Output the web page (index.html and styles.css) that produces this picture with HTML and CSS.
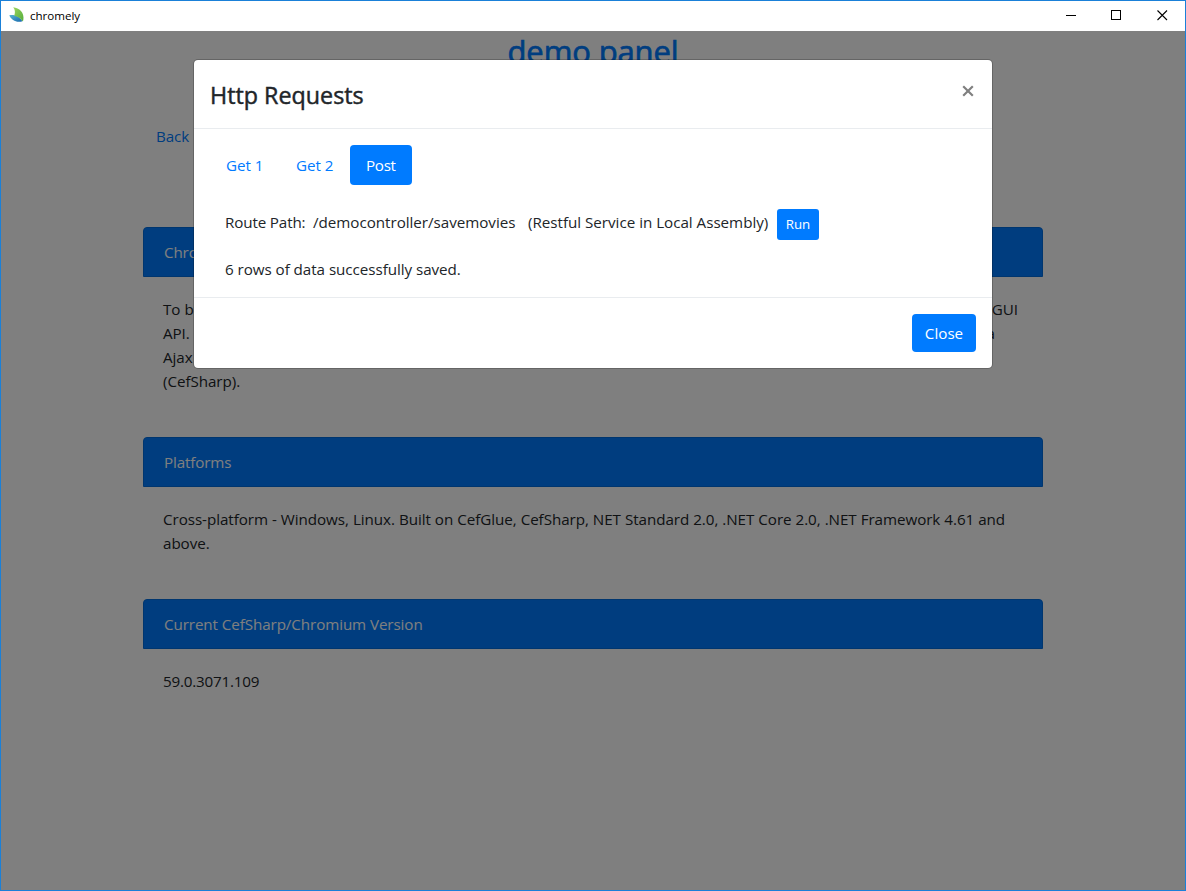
FILE: index.html
```
<!DOCTYPE html>
<html lang="en">
<head>
<meta charset="utf-8">
<title>chromely</title>
<link rel="stylesheet" href="styles.css">
</head>
<body>
<div class="window">
  <header class="titlebar">
    <svg class="logo" width="16" height="16" viewBox="0 0 16 16">
      <defs>
        <linearGradient id="leaf" x1="0" y1="0" x2="1" y2="1"><stop offset="0" stop-color="#9ad45c"/><stop offset="1" stop-color="#55ad3e"/></linearGradient>
        <linearGradient id="wave" x1="0" y1="0" x2="1" y2="1"><stop offset="0" stop-color="#59b5d5"/><stop offset="1" stop-color="#1769ac"/></linearGradient>
      </defs>
      <path d="M0.3 8.200C4 7.500 9.500 8 13.500 14.200C7.500 16 2.500 13.300 0.300 8.200Z" fill="url(#wave)"/>
      <path d="M4.200 0.300C10 0.800 15.800 5.500 14.300 13.200L13.500 14.200C11.500 10.800 8.500 9.500 5.300 8.700C6.500 5 6 2.500 4.200 0.300Z" fill="url(#leaf)"/>
    </svg>
    <span class="caption">chromely</span>
    <div class="controls">
      <svg width="45" height="29" viewBox="0 0 45 29" shape-rendering="crispEdges"><path d="M17 14.500H27" stroke="#000"/></svg>
      <svg width="46" height="29" viewBox="0 0 46 29" shape-rendering="crispEdges"><path d="M17.500 9.500H26.500V18.500H17.500Z" fill="none" stroke="#000"/></svg>
      <svg width="45" height="29" viewBox="0 0 45 29"><path d="M17.500 9.500L27 19M27 9.500L17.500 19" stroke="#000" stroke-width="1.100"/></svg>
    </div>
  </header>
  <main class="view">
    <div class="page">
      <h2 class="page-title">demo panel</h2>
      <a class="back">Back</a>
      <section class="card first">
        <h3 class="card-header">Chromely</h3>
        <div class="card-body">
          <div class="line"><span>To b</span><span class="gui">GUI</span></div>
          <div class="line"><span>API.</span><span class="tail">a</span></div>
          <div class="line"><span>Ajax</span></div>
          <div class="line"><span>(CefSharp).</span></div>
        </div>
      </section>
      <section class="card">
        <h3 class="card-header">Platforms</h3>
        <div class="card-body">Cross-platform - Windows, Linux. Built on CefGlue, CefSharp, NET Standard 2.0, .NET Core 2.0, .NET Framework 4.61 and<br>above.</div>
      </section>
      <section class="card">
        <h3 class="card-header version">Current CefSharp/Chromium Version</h3>
        <div class="card-body number">59.0.3071.109</div>
      </section>
    </div>
    <div class="backdrop">
      <div class="modal">
        <div class="modal-header">
          <h4 class="modal-title">Http Requests</h4>
          <svg class="dismiss" width="12" height="12" viewBox="0 0 12 12"><path d="M1.200 1.200L10.800 10.800M10.800 1.200L1.200 10.800" stroke="#808080" stroke-width="2.200"/></svg>
        </div>
        <div class="modal-body">
          <nav class="pills"><a class="pill">Get 1</a><a class="pill">Get 2</a><a class="pill active">Post</a></nav>
          <div class="route">
            <span class="label">Route Path:</span><span class="path">/democontroller/savemovies</span><span class="note">(Restful Service in Local Assembly)</span>
            <button class="btn small">Run</button>
          </div>
          <p class="result">6 rows of data successfully saved.</p>
        </div>
        <div class="modal-footer"><button class="btn">Close</button></div>
      </div>
    </div>
  </main>
</div>
</body>
</html>
```
FILE: styles.css
```
* { box-sizing: border-box; }
body {
  margin: 0;
  font: 400 15.2px/24px "Open Sans", "Noto Sans", sans-serif;
  letter-spacing: -0.045px;
  color: #212529;
  white-space: nowrap;
}
h2, h3, h4, p { margin: 0; }
.window {
  display: flex;
  flex-direction: column;
  width: 1186px;
  height: 891px;
  border: 1px solid #1a80d8;
  background: #fff;
  overflow: hidden;
}
.titlebar { display: flex; align-items: center; height: 30px; padding-left: 8px; }
.logo { display: block; margin-top: -2px; }
.caption { margin-left: 5px; color: #000; font-size: 11.6px; letter-spacing: -0.04px; }
.controls { display: flex; height: 29px; margin: 0 0 1px auto; }
.view { position: relative; flex: 1; overflow: hidden; }
.page { width: 900px; margin: 0 auto; display: flex; flex-direction: column; }
.page-title {
  margin-top: 1px;
  text-align: center;
  color: #007bff;
  font-size: 31px;
  font-weight: 500;
  line-height: 38px;
  letter-spacing: -0.13px;
  -webkit-text-stroke: 0.7px currentColor;
}
.back { margin: 54px 0 0 13px; color: #007bff; letter-spacing: -0.1px; }
.card { margin-bottom: 24px; }
.card.first { margin-top: 79px; }
.card-header {
  height: 50px;
  padding: 12px 20px;
  border: 1px solid #006cdf;
  border-radius: 4px 4px 0 0;
  background: #007bff;
  color: #fff;
  font: inherit;
  letter-spacing: -0.15px;
}
.card-header.version { letter-spacing: -0.09px; }
.card-body { padding: 20px; letter-spacing: -0.06px; word-spacing: 0.15px; }
.card-body.number { letter-spacing: -0.2px; }
.line { display: flex; justify-content: space-between; height: 24px; }
.gui { margin-right: 5px; }
.tail { margin-right: 28px; }
.backdrop {
  position: absolute;
  inset: 0;
  display: flex;
  align-items: flex-start;
  justify-content: center;
  padding-top: 28px;
  background: rgba(0, 0, 0, .5);
}
.modal {
  width: 800px;
  border: 1px solid rgba(0, 0, 0, .2);
  border-radius: 5px;
  background: #fff;
  background-clip: padding-box;
}
.modal-header {
  display: flex;
  justify-content: space-between;
  height: 69px;
  padding: 16px;
  border-bottom: 1px solid #e9ecef;
}
.modal-title {
  font-size: 23.300px;
  font-weight: 500;
  line-height: 38px;
  letter-spacing: 0;
  -webkit-text-stroke: 0.45px currentColor;
}
.dismiss { margin: 9px 2.500px 0 0; }
.modal-body { height: 168px; padding: 16px; }
.pills { display: flex; height: 40px; }
.pill { padding: 8px 16px; color: #007bff; }
.pill:nth-child(-n+2) { width: 70px; }
.pill.active { width: 62px; border-radius: 4px; background: #007bff; color: #fff; letter-spacing: -0.3px; }
.route { display: flex; height: 31px; margin: 24px 0 0 15px; line-height: 27px; }
.label { width: 88px; letter-spacing: -0.14px; }
.path { width: 215px; letter-spacing: -0.03px; }
.note { width: 249px; letter-spacing: -0.02px; }
.result { margin: 17px 0 0 15px; letter-spacing: -0.05px; }
.btn {
  height: 38px;
  padding: 0;
  width: 64px;
  border: 0;
  border-radius: 4px;
  background: #007bff;
  color: #fff;
  font: inherit;
  letter-spacing: 0;
}
.btn.small { width: 42px; height: 31px; border-radius: 3px; font-size: 13.300px; }
.modal-footer { height: 71px; padding: 16px; border-top: 1px solid #e9ecef; text-align: right; }
```
